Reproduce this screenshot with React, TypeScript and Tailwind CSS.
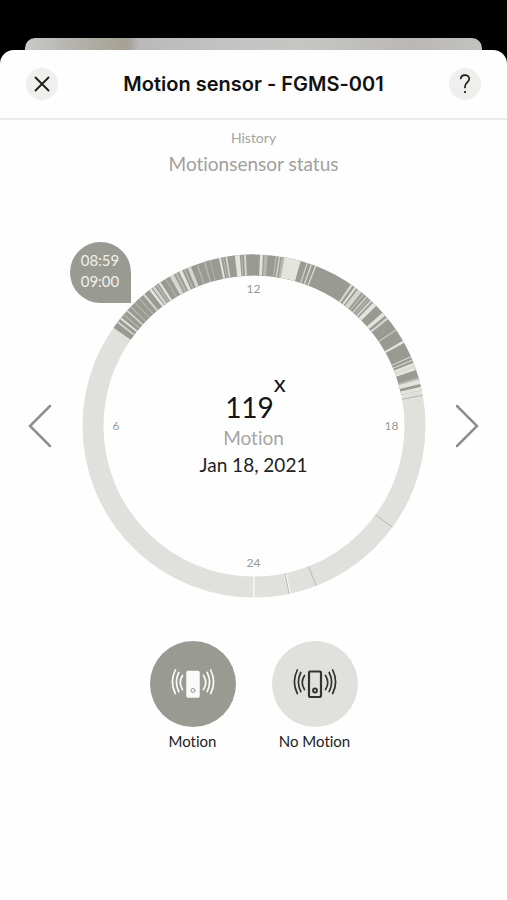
import { ReactNode } from "react";

type Band = [start: number, end: number, color: string];

const DARK = "#999b92";
const LIGHT = "#d6d6d1";
const PALE = "#e4e4de";
const MID = "#b5b6af";

// Angles are in degrees, clockwise from noon at the top of the dial.
const bands: Band[] = [
  [-55, 78, DARK],
  [-53, -52.4, LIGHT],
  [-51.4, -50.7, PALE],
  [-49.7, -49.2, MID],
  [-48, -47.4, LIGHT],
  [-46.2, -45.7, MID],
  [-44.2, -43.8, MID],
  [-42.2, -41.8, MID],
  [-40.3, -39.6, LIGHT],
  [-37.6, -36.7, PALE],
  [-36.3, -35.4, LIGHT],
  [-34.9, -34.2, MID],
  [-33.8, -33, PALE],
  [-31.2, -30.8, MID],
  [-29.4, -27.9, LIGHT],
  [-27.4, -26.5, MID],
  [-25.9, -24.8, PALE],
  [-24.2, -23.7, MID],
  [-22.8, -21.6, LIGHT],
  [-19.6, -19.1, MID],
  [-17.1, -16.5, MID],
  [-15, -14.7, MID],
  [-11.8, -11.1, PALE],
  [-10.5, -10.1, MID],
  [-9.6, -9, LIGHT],
  [-6.4, -4.8, PALE],
  [-4.4, -4, MID],
  [-3.4, -2.7, LIGHT],
  [2, 3, PALE],
  [3.4, 4.6, MID],
  [7.2, 7.7, MID],
  [8.3, 8.8, LIGHT],
  [9.3, 10.2, MID],
  [10.2, 15.8, PALE],
  [17.9, 18.3, LIGHT],
  [19.3, 19.8, LIGHT],
  [20.8, 21.3, LIGHT],
  [34.3, 35.1, LIGHT],
  [35.9, 36.6, PALE],
  [37.2, 38.8, LIGHT],
  [39.4, 40.1, MID],
  [40.8, 41.3, LIGHT],
  [41.8, 42.3, MID],
  [42.8, 43.4, LIGHT],
  [44, 45.5, PALE],
  [48.6, 49.9, PALE],
  [50.7, 51.5, LIGHT],
  [55.7, 56.1, LIGHT],
  [60.2, 61, PALE],
  [66, 66.4, LIGHT],
  [67.2, 67.6, LIGHT],
  [68.4, 70.9, PALE],
  [69.4, 69.8, LIGHT],
  [73.5, 74.2, MID],
  [74.2, 75.8, PALE],
  [76.8, 78, PALE],
  [79.5, 79.9, MID],
  [126, 126.3, MID],
  [158.6, 158.9, MID],
  [167.6, 168, "#fafaf8"],
  [168, 168.3, MID],
  [179.8, 180.3, "#fafaf8"],
];

const CENTER = 172;
const RADIUS = 161;

function point(deg: number) {
  const rad = (deg * Math.PI) / 180;
  return `${(CENTER + RADIUS * Math.sin(rad)).toFixed(2)} ${(CENTER - RADIUS * Math.cos(rad)).toFixed(2)}`;
}

function DayRing() {
  return (
    <svg viewBox="0 0 344 344" className="block w-full" fill="none" aria-hidden="true">
      <circle cx={CENTER} cy={CENTER} r={RADIUS} stroke="#e0e0dc" strokeWidth="21" />
      {bands.map(([start, end, color]) => (
        <path
          key={`${start}-${end}`}
          d={`M${point(start)} A${RADIUS} ${RADIUS} 0 0 1 ${point(end)}`}
          stroke={color}
          strokeWidth="21"
        />
      ))}
    </svg>
  );
}

function SensorIcon({ filled = false }: { filled?: boolean }) {
  return (
    <svg width="44" height="32" viewBox="0 0 44 32" fill="none" stroke="currentColor" strokeWidth="1.7" strokeLinecap="round" aria-hidden="true">
      <rect x="16" y="3.5" width="12" height="25.5" rx="1" fill={filled ? "currentColor" : "none"} strokeWidth={filled ? 1.5 : 2.2} />
      <circle cx="22" cy="22.5" r="2" stroke={filled ? DARK : "currentColor"} strokeWidth={filled ? 1 : 1.8} />
      <path d="M11.5 7.5Q7 14.5 11.5 21.5M7.8 4.5Q3 14 7.8 23.5M4.3 2Q-1.5 14 4.3 25.5" />
      <path d="M32.5 7.5Q37 14.5 32.5 21.5M36.2 4.5Q41 14 36.2 23.5M39.7 2Q45.5 14 39.7 25.5" />
    </svg>
  );
}

function RoundButton({ label, children }: { label: string; children: ReactNode }) {
  return (
    <button
      type="button"
      aria-label={label}
      className="flex size-8 shrink-0 items-center justify-center rounded-full bg-[#efefed] text-[#1c1c1c]"
    >
      {children}
    </button>
  );
}

function ArrowButton({ label, d }: { label: string; d: string }) {
  return (
    <button type="button" aria-label={label} className="shrink-0 text-[#8f908c]">
      <svg width="24" height="44" viewBox="0 0 24 44" fill="none" stroke="currentColor" strokeWidth="2.5" strokeLinecap="round">
        <path d={d} />
      </svg>
    </button>
  );
}

function StateButton({ label, className, children }: { label: string; className: string; children: ReactNode }) {
  return (
    <button type="button" className="flex w-[86px] flex-col items-center gap-1 text-[#222]">
      <span className={`flex size-[86px] items-center justify-center rounded-full ${className}`}>{children}</span>
      <span className="whitespace-nowrap text-[15px] leading-5">{label}</span>
    </button>
  );
}

export default function App() {
  return (
    <div className="flex min-h-screen flex-col bg-black pt-[38px] font-['Lato',sans-serif] [font-variant-ligatures:none]">
      <div className="mx-[25px] h-3 rounded-t-[10px] bg-[linear-gradient(90deg,#c9c9c8_0%,#b5b4ae_10%,#a5a193_22%,#a8a59b_23%,#b9b9b9_25%,#c3c3c3_45%,#c6c6c5_60%,#b9b8b5_85%,#c2c2c0_100%)]" />
      <div className="flex flex-1 flex-col rounded-t-[14px] bg-[#fefefe]">
        <header className="flex items-center justify-between border-b-2 border-[#ebebeb] px-[26px] py-[18px]">
          <RoundButton label="Close">
            <svg width="16" height="16" viewBox="0 0 16 16" fill="none" stroke="currentColor" strokeWidth="1.8" strokeLinecap="round">
              <path d="M1.5 1.5 14.5 14.5M14.5 1.5 1.5 14.5" />
            </svg>
          </RoundButton>
          <h1 className="font-['Inter',sans-serif] text-[20px] leading-6 font-semibold text-[#111]">
            Motion sensor - FGMS-001
          </h1>
          <RoundButton label="Help">
            <svg width="12" height="20" viewBox="0 0 12 20" fill="none" stroke="currentColor" strokeWidth="1.7" strokeLinecap="round">
              <path d="M1.8 4.5C2 2.4 3.7 1.2 6 1.2C8.5 1.2 10.2 2.6 10.2 4.8C10.2 8.5 6 8.3 6 12.8V13.5" />
              <path d="M6 18V18.1" strokeWidth="2.2" />
            </svg>
          </RoundButton>
        </header>

        <main className="flex flex-col items-center text-center">
          <p className="mt-2 text-[14px] leading-5 text-[#a5a5a2]">History</p>
          <h2 className="mt-1 text-[19px] leading-6 text-[#a0a09d]">Motionsensor status</h2>

          <section className="mt-[78px] flex w-full items-center justify-between px-7">
            <ArrowButton label="Previous day" d="M22 2 2 22 22 42" />
            <div className="relative max-w-[344px] flex-1">
              <DayRing />
              <div className="absolute -top-3 -left-3 flex size-[61px] flex-col items-center justify-center rounded-full rounded-br-none bg-[#999b92] pb-1 text-[15px] leading-[21px] text-[#f0f0ee]">
                <time>08:59</time>
                <time>09:00</time>
              </div>
              <div className="absolute inset-[27px] text-[12px] leading-4 text-[#999996]">
                <span className="absolute inset-x-0 top-0">12</span>
                <span className="absolute inset-x-0 bottom-0">24</span>
                <span className="absolute inset-y-0 left-1 flex items-center">6</span>
                <span className="absolute inset-y-0 right-0 flex items-center">18</span>
              </div>
              <div className="absolute inset-0 flex flex-col items-center justify-center pt-4">
                <p className="relative mr-2 text-[28px] leading-8 text-[#151515]">
                  119
                  <span className="absolute bottom-full left-full -mb-1 text-[24px] leading-6">x</span>
                </p>
                <p className="text-[19px] leading-[30px] text-[#a5a5a2]">Motion</p>
                <p className="text-[19px] leading-6 text-[#222]">Jan 18, 2021</p>
              </div>
            </div>
            <ArrowButton label="Next day" d="M2 2 22 22 2 42" />
          </section>

          <section className="mt-[43px] flex justify-center gap-9">
            <StateButton label="Motion" className="bg-[#999b92] text-[#fafafa]">
              <SensorIcon filled />
            </StateButton>
            <StateButton label="No Motion" className="bg-[#e0e0dc] text-[#333]">
              <SensorIcon />
            </StateButton>
          </section>
        </main>
      </div>
    </div>
  );
}
